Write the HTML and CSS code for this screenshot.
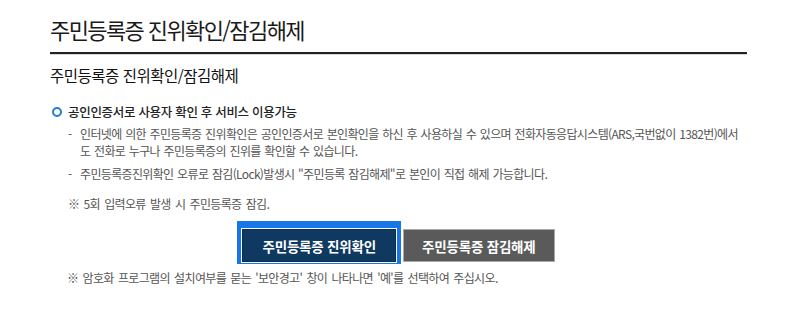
FILE: index.html
```html
<!DOCTYPE html>
<html lang="ko">
<head>
<meta charset="utf-8">
<title>주민등록증 진위확인/잠김해제</title>
<link rel="stylesheet" href="styles.css">
</head>
<body>
<div class="page">
  <h1 class="page-title">주민등록증 진위확인/잠김해제</h1>
  <h2 class="sec-title">주민등록증 진위확인/잠김해제</h2>
  <div class="info">
    <p class="info-head"><span class="ring"></span>공인인증서로 사용자 확인 후 서비스 이용가능</p>
    <ul class="dash-list">
      <li><span class="txt">인터넷에 의한 주민등록증 진위확인은 공인인증서로 본인확인을 하신 후 사용하실 수 있으며 전화자동응답시스템(ARS,국번없이 1382번)에서 <span class="nowrap">도 전화로</span> 누구나 주민등록증의 진위를 확인할 수 있습니다.</span></li>
      <li><span class="txt">주민등록증진위확인 오류로 잠김(Lock)발생시 "주민등록 잠김해제"로 본인이 직접 해제 가능합니다.</span></li>
    </ul>
    <p class="note">※ 5회 입력오류 발생 시 주민등록증 잠김.</p>
  </div>
  <div class="btns">
    <button type="button" class="btn btn-primary is-focus">주민등록증 진위확인</button>
    <button type="button" class="btn btn-gray">주민등록증 잠김해제</button>
  </div>
  <p class="note note-bottom">※ 암호화 프로그램의 설치여부를 묻는 '보안경고' 창이 나타나면 '예'를 선택하여 주십시오.</p>
</div>
</body>
</html>
```
FILE: styles.css
```css
* { box-sizing: border-box; }
html, body { margin: 0; padding: 0; background: #fff; }
body {
  font-family: "Noto Sans CJK KR", "Noto Sans", sans-serif;
  color: #555;
}
.page {
  padding: 0 53px 0 50px;
}
.page-title {
  margin: 0;
  padding: 14px 0 8px;
  font-size: 22px;
  line-height: 30px;
  font-weight: 400;
  letter-spacing: -1.6px;
  color: #1a1a1a;
  border-bottom: 2px solid #222;
  box-shadow: 0 1px 0 #d8d8d8;
}
.sec-title {
  margin: 11px 0 0;
  font-size: 15.5px;
  line-height: 20px;
  font-weight: 400;
  letter-spacing: -0.5px;
  color: #111;
}
.info-head {
  margin: 18px 0 0;
  padding-left: 2px;
  display: flex;
  align-items: center;
  font-size: 12.5px;
  line-height: 18px;
  font-weight: 500;
  letter-spacing: -0.3px;
  color: #222;
}
.ring {
  width: 10px;
  height: 10px;
  border: 2.5px solid #1f7fd6;
  border-radius: 50%;
  margin-right: 6px;
  flex-shrink: 0;
}
.dash-list {
  list-style: none;
  margin: 4px 0 0;
  padding: 0 0 0 18px;
}
.dash-list li {
  display: flex;
  font-size: 12px;
  line-height: 17px;
  letter-spacing: -0.65px;
  word-spacing: 0.9px;
  word-break: keep-all;
  color: #555;
}
.dash-list li::before {
  content: "-";
  width: 12px;
  flex-shrink: 0;
}
.dash-list .txt { flex: 1; }
.dash-list li + li { margin-top: 6px; }
.nowrap { white-space: nowrap; }
.note {
  margin: 13px 0 0;
  padding-left: 18px;
  font-size: 12px;
  line-height: 17px;
  letter-spacing: -0.65px;
  word-spacing: 1.5px;
  color: #555;
}
.btns {
  margin-top: 17px;
  display: flex;
  justify-content: center;
  gap: 7px;
}
.btn {
  height: 33px;
  padding: 0 18px;
  border: 1px solid transparent;
  font-family: inherit;
  font-size: 13.5px;
  font-weight: 700;
  letter-spacing: -0.2px;
  color: #fff;
  cursor: pointer;
}
.btn-primary {
  background: #0f3961;
  border-color: #0b2d4f;
  padding: 0 19px;
}
.is-focus {
  box-shadow: 0 0 0 1px #fff, 0 -3px 0 5px #1877e6;
}
.btn-gray {
  background: #5a5a5a;
  border-color: #a9a9a9;
}
.note-bottom {
  margin-top: 7px;
  padding-left: 17px;
}
```
